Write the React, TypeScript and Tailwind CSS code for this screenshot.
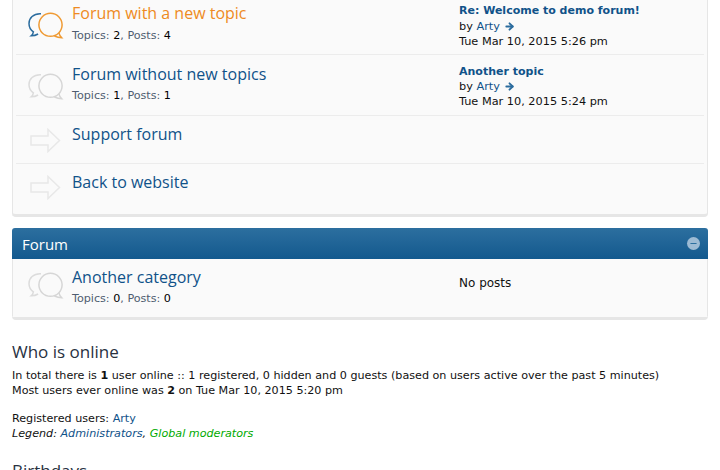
import { ArrowRight, Minus } from "lucide-react";

const verdana = "font-['DejaVu_Sans',sans-serif]";
const title = "font-['Open_Sans',sans-serif] text-[16px] leading-[22px]";

function BubbleIcon({ back, front }: { back: string; front: string }) {
  return (
    <svg width="37" height="28" viewBox="0 0 37 28" fill="none" className="shrink-0" strokeWidth="1.5">
      <path d="M13 1.700H12C5.500 1.700 1 6 1 11.500c0 3.500 1.600 6.500 4.400 8.300-.3 1.600-1 3-2.200 4 2.400 0 4.900-.6 6.900-1.800" stroke={back} />
      <ellipse cx="22.500" cy="12.800" rx="11.600" ry="11.500" stroke={front} />
      <path d="M31 21c.3 1.800 1.200 3.200 2.700 4.700-2.600 0-5-.6-7.200-1.700" stroke={front} />
    </svg>
  );
}

function ArrowIcon() {
  return (
    <svg width="31" height="25" viewBox="0 0 31 25" fill="none" stroke="#e8e8e8" strokeWidth="1.500" className="shrink-0">
      <path d="M1 8h17V1.500L29.500 12.500 18 23.500V17H1z" />
    </svg>
  );
}

function Stats({ topics, posts }: { topics: number; posts: number }) {
  return (
    <p className={`${verdana} text-[11.170px] leading-[16px] text-[#4f5d70]`}>
      Topics: <span className="text-black">{topics}</span>, Posts: <span className="text-black">{posts}</span>
    </p>
  );
}

function LastPost({ topic, time, gap }: { topic: string; time: string; gap?: boolean }) {
  return (
    <div className={`${verdana} text-[11.300px] leading-[15px] text-[#111]`}>
      <p className={`text-[11px] font-bold text-[#105289] ${gap ? "pb-[1px]" : ""}`}>{topic}</p>
      <p className="flex items-center gap-[4px]">
        <span>by <span className="text-[#105289]">Arty</span></span>
        <ArrowRight size={11} strokeWidth={4} className="text-[#2b6c9e]" />
      </p>
      <p>Tue Mar 10, 2015 {time} pm</p>
    </div>
  );
}

export default function App() {
  return (
    <div className="-mt-[6px] h-[476px] overflow-hidden bg-white px-3">
      {/* First block */}
      <div className="rounded-b border border-t-0 border-[#e6e6e6] border-b-[3px] bg-[#fafafa] px-[3px]">
        <div className="flex h-[61px] border-b border-[#ececec]">
          <div className="flex w-[443px] pl-3">
            <div className="mt-[18px]"><BubbleIcon back="#2b6c9e" front="#ef9a33" /></div>
            <div className="ml-[7px] pt-[8px]">
              <h3 className={`${title} text-[#ee8a22]`}>Forum with a new topic</h3>
              <div className="mt-[4px]"><Stats topics={2} posts={4} /></div>
            </div>
          </div>
          <div className="pt-[9px]"><LastPost topic="Re: Welcome to demo forum!" time="5:26" gap /></div>
        </div>
        <div className="flex h-[61px] border-b border-[#ececec]">
          <div className="flex w-[443px] pl-3">
            <div className="mt-[18px]"><BubbleIcon back="#dcdcdc" front="#d6d6d6" /></div>
            <div className="ml-[7px] pt-[8px]">
              <h3 className={`${title} text-[#105289]`}>Forum without new topics</h3>
              <div className="mt-[3px]"><Stats topics={1} posts={1} /></div>
            </div>
          </div>
          <div className="pt-[9px]"><LastPost topic="Another topic" time="5:24" /></div>
        </div>
        <div className="flex h-[48px] border-b border-[#ececec] pl-[14px]">
          <div className="mt-[12px]"><ArrowIcon /></div>
          <h3 className={`${title} ml-[11px] pt-[7px] text-[#105289]`}>Support forum</h3>
        </div>
        <div className="flex h-[50px] pl-[14px]">
          <div className="mt-[11px]"><ArrowIcon /></div>
          <h3 className={`${title} ml-[11px] pt-[7px] text-[#105289]`}>Back to website</h3>
        </div>
      </div>

      {/* Forum block */}
      <div className="mt-[11px] overflow-hidden rounded-t-[3px] rounded-b border-b-[3px] border-[#e6e6e6]">
        <div className="flex h-[31px] items-center justify-between bg-gradient-to-b from-[#2c6f9f] to-[#12598e] pl-[10px] pr-[8px]">
          <span className="pt-[1px] font-['Open_Sans',sans-serif] text-[15px] text-white">Forum</span>
          <span className="flex size-[13px] items-center justify-center rounded-full bg-[#9dbbd4]">
            <Minus size={9} strokeWidth={3} className="text-[#2c6f9f]" />
          </span>
        </div>
        <div className="flex h-[58px] border-x border-[#e6e6e6] bg-[#fafafa] px-[3px]">
          <div className="flex w-[443px] pl-3">
            <div className="mt-[13px]"><BubbleIcon back="#dcdcdc" front="#d6d6d6" /></div>
            <div className="ml-[7px] pt-[7px]">
              <h3 className={`${title} text-[#105289]`}>Another category</h3>
              <div className="mt-[3px]"><Stats topics={0} posts={0} /></div>
            </div>
          </div>
          <p className={`${verdana} pt-[15px] text-[12px] text-[#111]`}>No posts</p>
        </div>
      </div>

      {/* Who is online */}
      <h3 className="mt-[20px] font-['Open_Sans',sans-serif] text-[17px] leading-[24px] text-[#28313f]">Who is online</h3>
      <div className={`${verdana} mt-[4px] text-[11.170px] leading-[15px] text-[#111]`}>
        <p>In total there is <b>1</b> user online :: 1 registered, 0 hidden and 0 guests (based on users active over the past 5 minutes)</p>
        <p>Most users ever online was <b>2</b> on Tue Mar 10, 2015 5:20 pm</p>
        <p className="mt-[13px]">Registered users: <span className="text-[#105289]">Arty</span></p>
        <p><em>Legend: <span className="text-[#105289]">Administrators</span>, <span className="text-[#00aa00]">Global moderators</span></em></p>
      </div>
      <h3 className="mt-[18px] font-['Open_Sans',sans-serif] text-[17px] leading-[24px] text-[#28313f]">Birthdays</h3>
    </div>
  );
}
